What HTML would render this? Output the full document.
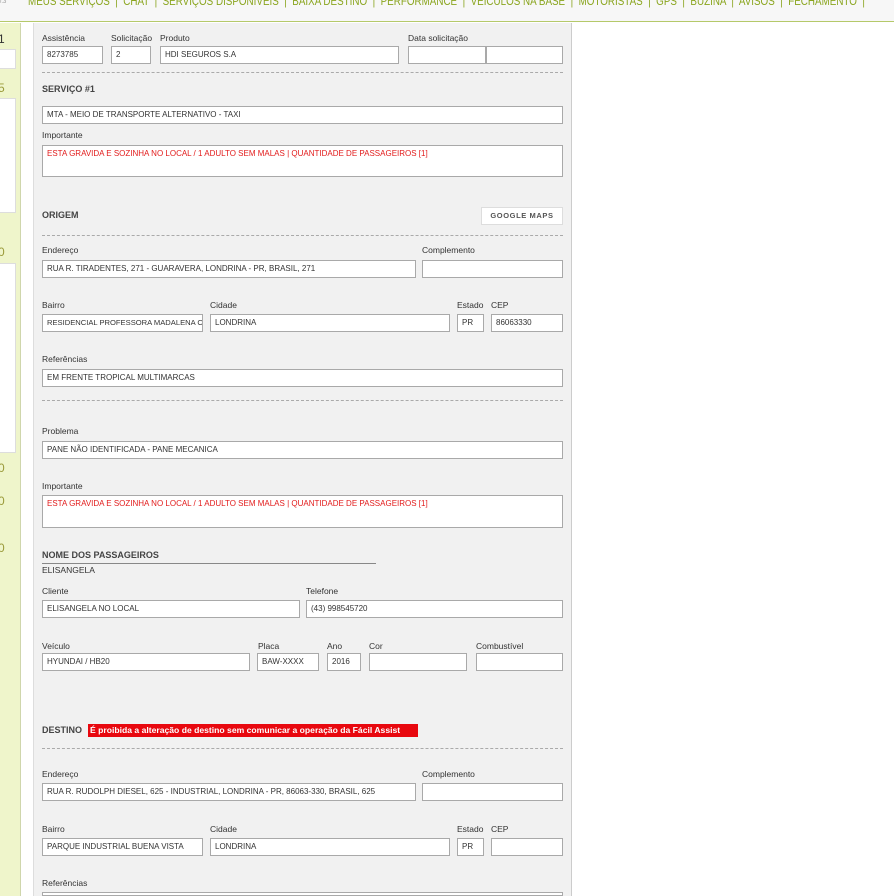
<!DOCTYPE html>
<html><head><meta charset="utf-8"><style>
*{margin:0;padding:0;box-sizing:border-box}
body{width:894px;height:896px;overflow:hidden;background:#fff;font-family:"Liberation Sans",Tahoma,sans-serif;font-size:9px;color:#333;position:relative}
.nav{position:absolute;left:0;top:0;width:894px;height:22px;background:#f7f7f7;border-bottom:1px solid #b5c96a;overflow:hidden}
.nav span{position:absolute;top:-4px;font-size:11.5px;color:#8aa51e;white-space:nowrap}
.nav .m{transform:scaleX(0.855);transform-origin:0 0}
.side{position:absolute;left:0;top:23px;width:21px;height:873px;background:#eff5cb;border-right:1px solid #cfd6ac;overflow:hidden}
.side b{position:absolute;left:-2px;font-size:12px;font-weight:normal;color:#9a9a3a}
.sb{position:absolute;left:-1px;width:17px;background:#fff;border:1px solid #ddd}
.panel{position:absolute;left:33px;top:23px;width:539px;height:873px;background:#f1f1f1;border-left:1px solid #ddd;border-right:1px solid #ccc}
.a{position:absolute;white-space:nowrap}
.l{position:absolute;font-size:8.5px;color:#333;white-space:nowrap}
.i{position:absolute;height:18px;background:#fff;border:1px solid #a9a9a9;font-size:8px;line-height:16px;padding-left:4px;white-space:nowrap;overflow:hidden;color:#333}
.t{position:absolute;background:#fff;border:1px solid #a9a9a9;font-size:8px;padding:3px 4px;color:#e21b1b;white-space:nowrap;overflow:hidden}
.h{position:absolute;font-size:9px;font-weight:bold;color:#444;white-space:nowrap}
.d{position:absolute;left:42px;width:521px;border-top:1px dashed #aaa;height:0}
</style></head><body>
<div class="nav">
<span style="left:-2px;font-size:6px;top:-1px;color:#999">0.3</span>
<span class="m" style="left:28px">MEUS SERVIÇOS &nbsp;|&nbsp; CHAT &nbsp;|&nbsp; SERVIÇOS DISPONIVEIS &nbsp;|&nbsp; BAIXA DESTINO &nbsp;|&nbsp; PERFORMANCE &nbsp;|&nbsp; VEICULOS NA BASE &nbsp;|&nbsp; MOTORISTAS &nbsp;|&nbsp; GPS &nbsp;|&nbsp; BUZINA &nbsp;|&nbsp; AVISOS &nbsp;|&nbsp; FECHAMENTO &nbsp;|</span>
</div>
<div class="side">
<b style="top:9px;color:#333">1</b><div class="sb" style="top:26px;height:20px"></div>
<b style="top:58px">5</b><div class="sb" style="top:75px;height:115px"></div>
<b style="top:222px">0</b><div class="sb" style="top:240px;height:190px"></div>
<b style="top:438px">0</b><b style="top:471px">0</b><b style="top:518px">0</b>
</div>
<div class="panel"></div>

<div class="l" style="left:42px;top:33px">Assistência</div>
<div class="l" style="left:111px;top:33px">Solicitação</div>
<div class="l" style="left:160px;top:33px">Produto</div>
<div class="l" style="left:408px;top:33px">Data solicitação</div>
<div class="i" style="left:42px;top:46px;width:61px">8273785</div>
<div class="i" style="left:111px;top:46px;width:40px">2</div>
<div class="i" style="left:160px;top:46px;width:239px">HDI SEGUROS S.A</div>
<div class="i" style="left:408px;top:46px;width:78px"></div>
<div class="i" style="left:486px;top:46px;width:77px"></div>
<div class="d" style="top:72px"></div>

<div class="h" style="left:42px;top:84px">SERVIÇO #1</div>
<div class="i" style="left:42px;top:106px;width:521px">MTA - MEIO DE TRANSPORTE ALTERNATIVO - TAXI</div>
<div class="l" style="left:42px;top:130px">Importante</div>
<div class="t" style="left:42px;top:145px;width:521px;height:32px">ESTA GRAVIDA E SOZINHA NO LOCAL / 1 ADULTO SEM MALAS | QUANTIDADE DE PASSAGEIROS [1]</div>

<div class="h" style="left:42px;top:210px">ORIGEM</div>
<div class="a" style="left:481px;top:207px;width:82px;height:18px;background:#fff;border:1px solid #ddd;font-size:7.5px;font-weight:bold;color:#555;letter-spacing:0.6px;text-align:center;line-height:16px">GOOGLE MAPS</div>
<div class="d" style="top:235px"></div>
<div class="l" style="left:42px;top:245px">Endereço</div>
<div class="l" style="left:422px;top:245px">Complemento</div>
<div class="i" style="left:42px;top:260px;width:374px">RUA R. TIRADENTES, 271 - GUARAVERA, LONDRINA - PR, BRASIL, 271</div>
<div class="i" style="left:422px;top:260px;width:141px"></div>
<div class="l" style="left:42px;top:300px">Bairro</div>
<div class="l" style="left:210px;top:300px">Cidade</div>
<div class="l" style="left:457px;top:300px">Estado</div>
<div class="l" style="left:491px;top:300px">CEP</div>
<div class="i" style="left:42px;top:314px;width:161px;font-size:7.6px">RESIDENCIAL PROFESSORA MADALENA CA</div>
<div class="i" style="left:210px;top:314px;width:240px">LONDRINA</div>
<div class="i" style="left:457px;top:314px;width:27px">PR</div>
<div class="i" style="left:491px;top:314px;width:72px">86063330</div>
<div class="l" style="left:42px;top:354px">Referências</div>
<div class="i" style="left:42px;top:369px;width:521px">EM FRENTE TROPICAL MULTIMARCAS</div>
<div class="d" style="top:400px"></div>
<div class="l" style="left:42px;top:426px">Problema</div>
<div class="i" style="left:42px;top:441px;width:521px">PANE NÃO IDENTIFICADA - PANE MECANICA</div>
<div class="l" style="left:42px;top:481px">Importante</div>
<div class="t" style="left:42px;top:495px;width:521px;height:33px">ESTA GRAVIDA E SOZINHA NO LOCAL / 1 ADULTO SEM MALAS | QUANTIDADE DE PASSAGEIROS [1]</div>

<div class="h" style="left:42px;top:550px">NOME DOS PASSAGEIROS</div>
<div class="a" style="left:42px;top:563px;width:334px;border-top:1px solid #888"></div>
<div class="l" style="left:42px;top:565px">ELISANGELA</div>
<div class="l" style="left:42px;top:586px">Cliente</div>
<div class="l" style="left:306px;top:586px">Telefone</div>
<div class="i" style="left:42px;top:600px;width:258px">ELISANGELA NO LOCAL</div>
<div class="i" style="left:306px;top:600px;width:257px">(43) 998545720</div>
<div class="l" style="left:42px;top:641px">Veículo</div>
<div class="l" style="left:258px;top:641px">Placa</div>
<div class="l" style="left:327px;top:641px">Ano</div>
<div class="l" style="left:369px;top:641px">Cor</div>
<div class="l" style="left:476px;top:641px">Combustível</div>
<div class="i" style="left:42px;top:653px;width:208px">HYUNDAI / HB20</div>
<div class="i" style="left:257px;top:653px;width:62px">BAW-XXXX</div>
<div class="i" style="left:327px;top:653px;width:34px">2016</div>
<div class="i" style="left:369px;top:653px;width:98px"></div>
<div class="i" style="left:476px;top:653px;width:87px"></div>

<div class="h" style="left:42px;top:725px">DESTINO</div>
<div class="a" style="left:88px;top:724px;width:330px;height:13px;background:#e8080f;color:#fff;font-weight:bold;font-size:8.6px;line-height:13px;padding-left:2px">É proibida a alteração de destino sem comunicar a operação da Fácil Assist</div>
<div class="d" style="top:748px"></div>
<div class="l" style="left:42px;top:769px">Endereço</div>
<div class="l" style="left:422px;top:769px">Complemento</div>
<div class="i" style="left:42px;top:783px;width:374px">RUA R. RUDOLPH DIESEL, 625 - INDUSTRIAL, LONDRINA - PR, 86063-330, BRASIL, 625</div>
<div class="i" style="left:422px;top:783px;width:141px"></div>
<div class="l" style="left:42px;top:824px">Bairro</div>
<div class="l" style="left:210px;top:824px">Cidade</div>
<div class="l" style="left:457px;top:824px">Estado</div>
<div class="l" style="left:491px;top:824px">CEP</div>
<div class="i" style="left:42px;top:838px;width:161px">PARQUE INDUSTRIAL BUENA VISTA</div>
<div class="i" style="left:210px;top:838px;width:240px">LONDRINA</div>
<div class="i" style="left:457px;top:838px;width:27px">PR</div>
<div class="i" style="left:491px;top:838px;width:72px"></div>
<div class="l" style="left:42px;top:878px">Referências</div>
<div class="i" style="left:42px;top:892px;width:521px;height:4px"></div>
</body></html>
